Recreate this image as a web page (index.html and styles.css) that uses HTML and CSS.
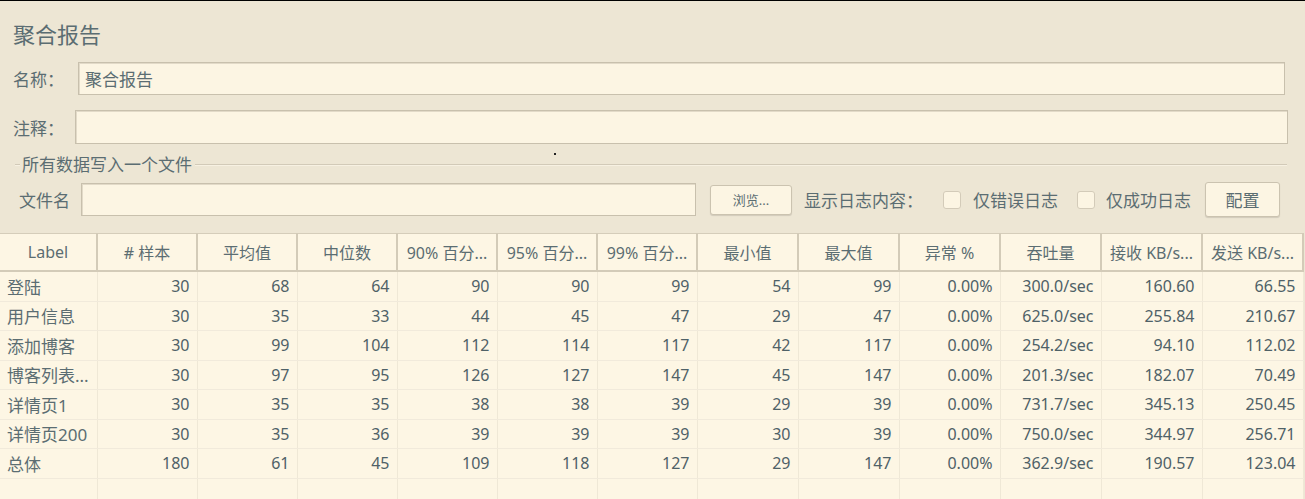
FILE: index.html
```html
<!DOCTYPE html>
<html lang="zh-CN">
<head>
	<meta charset="UTF-8">
	<title>聚合报告</title>
	<link rel="stylesheet" href="styles.css">
</head>
<body>
	<div class="sheet">
		<h1 class="title">聚合报告</h1>
		<div class="field field-name">
			<label class="field-label" for="name">名称：</label>
			<input class="text-box" type="text" id="name" value="聚合报告">
		</div>
		<div class="field field-note">
			<label class="field-label" for="note">注释：</label>
			<input class="text-box" type="text" id="note" value="">
		</div>
		<div class="group">
			<div class="group-head">
				<span class="group-line group-line-lead"></span>
				<span class="group-title">所有数据写入一个文件</span>
				<span class="group-line"></span>
			</div>
			<div class="file-row">
				<label class="file-label" for="file">文件名</label>
				<input class="text-box file-box" type="text" id="file" value="">
				<button class="btn btn-browse">浏览...</button>
				<span class="log-label">显示日志内容：</span>
				<span class="check"></span>
				<span class="check-text">仅错误日志</span>
				<span class="check check-second"></span>
				<span class="check-text check-text-second">仅成功日志</span>
				<button class="btn btn-config">配置</button>
			</div>
		</div>
		<span class="speck"></span>
	</div>

	<table class="report">
		<colgroup>
			<col class="c-label">
			<col class="c-100"><col class="c-100"><col class="c-100"><col class="c-100"><col class="c-100"><col class="c-100">
			<col class="c-101"><col class="c-101"><col class="c-101"><col class="c-101"><col class="c-101"><col class="c-101">
		</colgroup>
		<thead>
			<tr>
				<th>Label</th><th># 样本</th><th>平均值</th><th>中位数</th><th>90% 百分...</th><th>95% 百分...</th><th>99% 百分...</th><th>最小值</th><th>最大值</th><th>异常 %</th><th>吞吐量</th><th>接收 KB/s...</th><th>发送 KB/s...</th>
			</tr>
		</thead>
		<tbody>
			<tr><td class="name">登陆</td><td>30</td><td>68</td><td>64</td><td>90</td><td>90</td><td>99</td><td>54</td><td>99</td><td>0.00%</td><td>300.0/sec</td><td>160.60</td><td>66.55</td></tr>
			<tr><td class="name">用户信息</td><td>30</td><td>35</td><td>33</td><td>44</td><td>45</td><td>47</td><td>29</td><td>47</td><td>0.00%</td><td>625.0/sec</td><td>255.84</td><td>210.67</td></tr>
			<tr><td class="name">添加博客</td><td>30</td><td>99</td><td>104</td><td>112</td><td>114</td><td>117</td><td>42</td><td>117</td><td>0.00%</td><td>254.2/sec</td><td>94.10</td><td>112.02</td></tr>
			<tr><td class="name">博客列表...</td><td>30</td><td>97</td><td>95</td><td>126</td><td>127</td><td>147</td><td>45</td><td>147</td><td>0.00%</td><td>201.3/sec</td><td>182.07</td><td>70.49</td></tr>
			<tr><td class="name">详情页1</td><td>30</td><td>35</td><td>35</td><td>38</td><td>38</td><td>39</td><td>29</td><td>39</td><td>0.00%</td><td>731.7/sec</td><td>345.13</td><td>250.45</td></tr>
			<tr><td class="name">详情页200</td><td>30</td><td>35</td><td>36</td><td>39</td><td>39</td><td>39</td><td>30</td><td>39</td><td>0.00%</td><td>750.0/sec</td><td>344.97</td><td>256.71</td></tr>
			<tr><td class="name">总体</td><td>180</td><td>61</td><td>45</td><td>109</td><td>118</td><td>127</td><td>29</td><td>147</td><td>0.00%</td><td>362.9/sec</td><td>190.57</td><td>123.04</td></tr>
			<tr class="blank"><td></td><td></td><td></td><td></td><td></td><td></td><td></td><td></td><td></td><td></td><td></td><td></td><td></td></tr>
		</tbody>
	</table>
</body>
</html>
```

FILE: styles.css
```css
html, body {
	margin: 0;
	padding: 0;
	height: 100%;
	overflow: hidden;
}
body {
	background: #ede6d4;
	border-top: 1px solid #000;
	box-sizing: border-box;
	font-family: "Noto Sans", "Noto Sans CJK SC", sans-serif;
	color: #5b6d72;
}
.sheet {
	position: relative;
}
.title {
	margin: 0;
	height: 61px;
	box-sizing: border-box;
	padding: 18px 0 0 13px;
	font-size: 22px;
	font-weight: normal;
	line-height: 30px;
}
.field {
	display: flex;
	align-items: center;
	padding-left: 13px;
}
.field-label {
	font-size: 17px;
	flex: none;
}
.field-name {
	height: 33px;
	margin-bottom: 15px;
	padding-right: 20px;
}
.field-name .field-label {
	width: 65px;
}
.field-note {
	height: 34px;
	padding-right: 17px;
}
.field-note .field-label {
	width: 62px;
}
.text-box {
	flex: 1;
	height: 100%;
	box-sizing: border-box;
	margin: 0;
	padding: 0 6px;
	background: #fcf5e3;
	border: 1px solid #c8c0ad;
	box-shadow: inset 1px 1px 0 #e2dac8;
	font-family: inherit;
	font-size: 17px;
	color: #5b6d72;
	outline: none;
}
.group-head {
	display: flex;
	align-items: center;
	height: 16px;
	margin: 13px 18px 0 15px;
}
.group-line {
	flex: 1;
	height: 0;
	border-top: 1px solid #d2cab8;
	border-bottom: 1px solid #f7f1e2;
}
.group-line-lead {
	flex: none;
	width: 5px;
}
.group-title {
	font-size: 17px;
	line-height: 16px;
	padding: 0 3px 0 2px;
}
.file-row {
	display: flex;
	align-items: center;
	height: 33px;
	margin-top: 10px;
	padding-left: 19px;
	font-size: 17px;
	white-space: nowrap;
}
.file-label {
	width: 62px;
	flex: none;
}
.file-box {
	flex: none;
	width: 615px;
}
.btn {
	background: #fcf5e3;
	border: 1px solid #cbc3b0;
	border-radius: 3px;
	box-shadow: 0 1px 1px rgba(0, 0, 0, .12);
	font-family: inherit;
	color: #5b6d72;
	padding: 0;
}
.btn-browse {
	width: 82px;
	height: 30px;
	margin-left: 14px;
	font-size: 13px;
}
.log-label {
	margin-left: 12px;
	width: 119px;
}
.check {
	width: 18px;
	height: 18px;
	box-sizing: border-box;
	margin-left: 20px;
	background: #fcf5e3;
	border: 1px solid #d3cbb9;
	border-radius: 3px;
}
.check-second {
	margin-left: 19px;
}
.check-text {
	margin-left: 12px;
	width: 85px;
}
.check-text-second {
	margin-left: 11px;
}
.btn-config {
	width: 75px;
	height: 35px;
	margin-left: 14px;
	font-size: 17px;
}
.speck {
	position: absolute;
	left: 554px;
	top: 152px;
	width: 2px;
	height: 2px;
	background: #222;
}

/* results table */
.report {
	margin-top: 17px;
	width: 1303px;
	table-layout: fixed;
	border-collapse: collapse;
	background: #fdf6e4;
	border-top: 1px solid #d5cdba;
	color: #4f6167;
}
.c-label { width: 97px; }
.c-100 { width: 100px; }
.c-101 { width: 101px; }
.report th {
	height: 36px;
	padding: 0 4px;
	font-size: 16px;
	font-weight: normal;
	text-align: center;
	white-space: nowrap;
	overflow: hidden;
	color: #5b6d72;
	border-right: 2px solid #d3cbb8;
	border-bottom: 2px solid #d3cbb8;
}
.report td {
	height: 28.5px;
	padding: 0 7px 0 0;
	font-size: 16px;
	text-align: right;
	white-space: nowrap;
	overflow: hidden;
	border-right: 1px solid #efe8d6;
	border-bottom: 1px solid #f1eadb;
}
.report td.name {
	text-align: left;
	padding: 0 0 0 7px;
	font-size: 17px;
	color: #5b6d72;
}
```
